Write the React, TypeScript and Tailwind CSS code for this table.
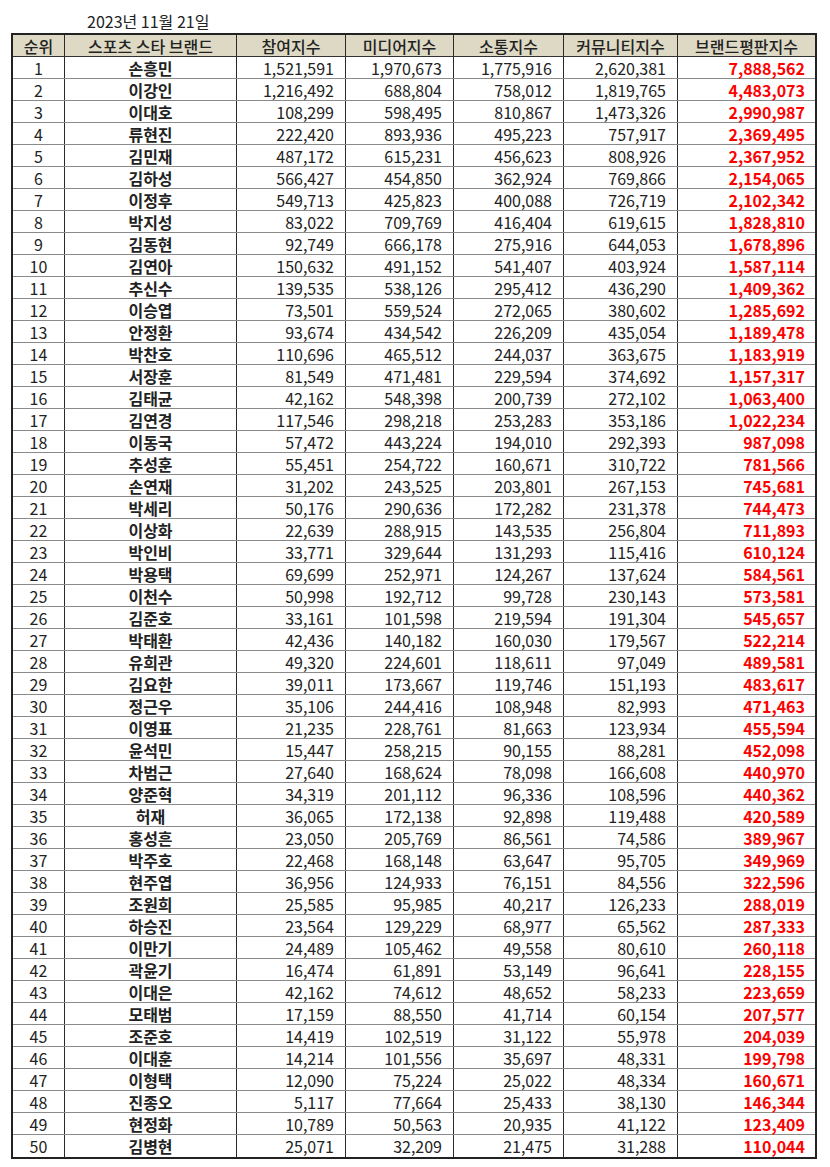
import React from 'react';

type Row = [string, string, string, string, string, string];

const ROWS: Row[] = [
  ['손흥민', '1,521,591', '1,970,673', '1,775,916', '2,620,381', '7,888,562'],
  ['이강인', '1,216,492', '688,804', '758,012', '1,819,765', '4,483,073'],
  ['이대호', '108,299', '598,495', '810,867', '1,473,326', '2,990,987'],
  ['류현진', '222,420', '893,936', '495,223', '757,917', '2,369,495'],
  ['김민재', '487,172', '615,231', '456,623', '808,926', '2,367,952'],
  ['김하성', '566,427', '454,850', '362,924', '769,866', '2,154,065'],
  ['이정후', '549,713', '425,823', '400,088', '726,719', '2,102,342'],
  ['박지성', '83,022', '709,769', '416,404', '619,615', '1,828,810'],
  ['김동현', '92,749', '666,178', '275,916', '644,053', '1,678,896'],
  ['김연아', '150,632', '491,152', '541,407', '403,924', '1,587,114'],
  ['추신수', '139,535', '538,126', '295,412', '436,290', '1,409,362'],
  ['이승엽', '73,501', '559,524', '272,065', '380,602', '1,285,692'],
  ['안정환', '93,674', '434,542', '226,209', '435,054', '1,189,478'],
  ['박찬호', '110,696', '465,512', '244,037', '363,675', '1,183,919'],
  ['서장훈', '81,549', '471,481', '229,594', '374,692', '1,157,317'],
  ['김태균', '42,162', '548,398', '200,739', '272,102', '1,063,400'],
  ['김연경', '117,546', '298,218', '253,283', '353,186', '1,022,234'],
  ['이동국', '57,472', '443,224', '194,010', '292,393', '987,098'],
  ['추성훈', '55,451', '254,722', '160,671', '310,722', '781,566'],
  ['손연재', '31,202', '243,525', '203,801', '267,153', '745,681'],
  ['박세리', '50,176', '290,636', '172,282', '231,378', '744,473'],
  ['이상화', '22,639', '288,915', '143,535', '256,804', '711,893'],
  ['박인비', '33,771', '329,644', '131,293', '115,416', '610,124'],
  ['박용택', '69,699', '252,971', '124,267', '137,624', '584,561'],
  ['이천수', '50,998', '192,712', '99,728', '230,143', '573,581'],
  ['김준호', '33,161', '101,598', '219,594', '191,304', '545,657'],
  ['박태환', '42,436', '140,182', '160,030', '179,567', '522,214'],
  ['유희관', '49,320', '224,601', '118,611', '97,049', '489,581'],
  ['김요한', '39,011', '173,667', '119,746', '151,193', '483,617'],
  ['정근우', '35,106', '244,416', '108,948', '82,993', '471,463'],
  ['이영표', '21,235', '228,761', '81,663', '123,934', '455,594'],
  ['윤석민', '15,447', '258,215', '90,155', '88,281', '452,098'],
  ['차범근', '27,640', '168,624', '78,098', '166,608', '440,970'],
  ['양준혁', '34,319', '201,112', '96,336', '108,596', '440,362'],
  ['허재', '36,065', '172,138', '92,898', '119,488', '420,589'],
  ['홍성흔', '23,050', '205,769', '86,561', '74,586', '389,967'],
  ['박주호', '22,468', '168,148', '63,647', '95,705', '349,969'],
  ['현주엽', '36,956', '124,933', '76,151', '84,556', '322,596'],
  ['조원희', '25,585', '95,985', '40,217', '126,233', '288,019'],
  ['하승진', '23,564', '129,229', '68,977', '65,562', '287,333'],
  ['이만기', '24,489', '105,462', '49,558', '80,610', '260,118'],
  ['곽윤기', '16,474', '61,891', '53,149', '96,641', '228,155'],
  ['이대은', '42,162', '74,612', '48,652', '58,233', '223,659'],
  ['모태범', '17,159', '88,550', '41,714', '60,154', '207,577'],
  ['조준호', '14,419', '102,519', '31,122', '55,978', '204,039'],
  ['이대훈', '14,214', '101,556', '35,697', '48,331', '199,798'],
  ['이형택', '12,090', '75,224', '25,022', '48,334', '160,671'],
  ['진종오', '5,117', '77,664', '25,433', '38,130', '146,344'],
  ['현정화', '10,789', '50,563', '20,935', '41,122', '123,409'],
  ['김병현', '25,071', '32,209', '21,475', '31,288', '110,044'],
];

const HEADERS = ['순위', '스포츠 스타 브랜드', '참여지수', '미디어지수', '소통지수', '커뮤니티지수', '브랜드평판지수'];

const GRID = 'grid grid-cols-[52px_172px_109px_108px_110px_114px_137px]';
const CELL = 'flex items-center border-r border-[#2a2a2a] leading-none';

export default function App() {
  return (
    <div className="min-h-[1167px] bg-white pl-[11px] text-[#222] font-['Noto_Sans_CJK_KR',sans-serif]">
      <div className="flex h-[33px] items-center pl-[76px] pt-[8px] text-[16px] leading-none">2023년 11월 21일</div>

      <div className="w-[806px] border-2 border-[#222]">
        <div className={`${GRID} h-[22px] border-b border-[#333] bg-[#ddd9c4] text-[16px] font-medium`}>
          {HEADERS.map((h, i) => (
            <div key={h} className={`${CELL} justify-center ${i === 6 ? 'border-r-0' : ''}`}>
              {h}
            </div>
          ))}
        </div>

        {ROWS.map((r, idx) => (
          <div
            key={r[0]}
            className={`${GRID} h-[22px] text-[16px] ${idx === ROWS.length - 1 ? '' : 'border-b border-[#8a8a8a]'}`}
          >
            <div className={`${CELL} justify-center`}>{idx + 1}</div>
            <div className={`${CELL} justify-center font-bold`}>{r[0]}</div>
            <div className={`${CELL} justify-end pr-[11px]`}>{r[1]}</div>
            <div className={`${CELL} justify-end pr-[11px]`}>{r[2]}</div>
            <div className={`${CELL} justify-end pr-[11px]`}>{r[3]}</div>
            <div className={`${CELL} justify-end pr-[11px]`}>{r[4]}</div>
            <div className="flex items-center justify-end pr-[10px] font-bold leading-none text-[#ff0000]">{r[5]}</div>
          </div>
        ))}
      </div>
    </div>
  );
}
